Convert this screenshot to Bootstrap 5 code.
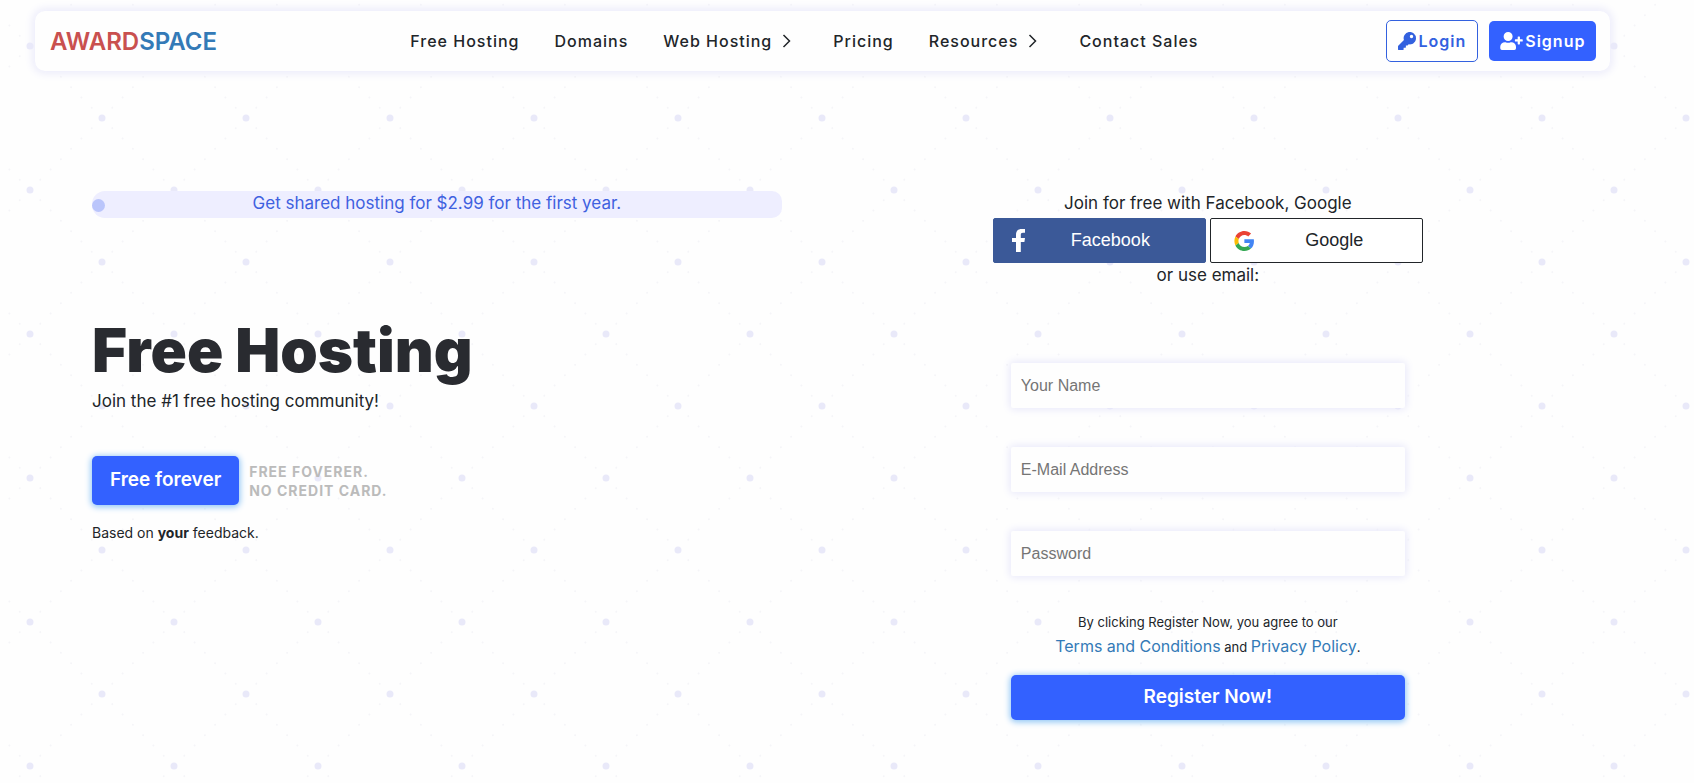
<!DOCTYPE html>
<html lang="en">
<head>
<meta charset="utf-8">
<meta name="viewport" content="width=device-width, initial-scale=1">
<title>Free Hosting - AwardSpace</title>
<link href="https://cdn.jsdelivr.net/npm/bootstrap@5.3.0/dist/css/bootstrap.min.css" rel="stylesheet">
<style>
  :root { --brand: #3361ff; --ink: #212529; }
  body {
    font-family: Inter, "Noto Sans", sans-serif;
    font-size: 17px; line-height: 24px; color: var(--ink);
    background-color: #fefefe;
    background-image: url("data:image/svg+xml,%3Csvg xmlns='http://www.w3.org/2000/svg' width='144' height='144'%3E%3Cg fill='none' stroke-linecap='round'%3E%3Cg stroke='%23f5f5f8' stroke-width='2' stroke-dasharray='0 14.546'%3E%3Cpath d='M30 46L174 190M30 46L-114 -98M30 46L174 -98M30 46L-114 190M-42 118L102 -26M102 118L246 -26M102 118L-42 262M30 190L174 46M30 -98L174 46M-42 -26L102 118M102 118L246 262'/%3E%3C/g%3E%3Cpath d='M30 46h0M102 118h0' stroke='%23e9e9f9' stroke-width='7'/%3E%3C/g%3E%3C/svg%3E");
    background-size: 144px 144px;
  }
  .site-bar {
    width: 93%; margin: 11px 0 0 35px; min-height: 60px; padding: 0 14px 0 15px;
    background: #fefefe; border-radius: 10px; font-size: 16px;
    box-shadow: 0 0 10px 2px #e9e9fa;
  }
  .brand-slot { width: 23.3%; padding-top: 3px; }
  .wordmark { font-size: 24px; font-weight: 600; color: #c9504f; }
  .wordmark span { color: #337ab7; }
  .site-links { gap: 35px; }
  .site-links .nav-link { display: flex; align-items: center; color: var(--ink); font-weight: 500; letter-spacing: 1px; padding: 0 0 1px; }
  .site-links svg { margin: 0 7px 0 10px; }
  .bar-actions { gap: 11px; }
  .bar-btn { height: 40px; padding: 0 11px; font-weight: 600; letter-spacing: 1px; border-radius: 5px; gap: 2px; }
  .bar-login { height: 42px; color: #3361df; border: 1px solid #3361df; background: #fff; }
  .btn-brand, .btn-brand:hover { color: #fff; background: var(--brand); border: 0; }
  .hero { display: grid; grid-template-columns: 7fr 8fr; column-gap: 32px; padding: 120px 92px 40px; }
  .promo { min-height: 27px; padding-bottom: 3px; border-radius: 13px 10px 10px 13px; background: #eeeeff; color: #3f61df; }
  .promo::before { content: ""; width: 13px; height: 13px; margin: 5px -13px 0 0; border-radius: 50%; background: #bac5fb; }
  .hero-title { margin: 96px 0 3px; font-size: 60px; line-height: 72px; font-weight: 900; color: #292b30; }
  .glow { font-weight: 600; font-size: 19px; border-radius: 5px; box-shadow: 0 1px 6px 1px #8cc4f5; }
  .cta-row { gap: 10px; margin-top: 43px; }
  .cta { height: 49px; padding: 0 18px; }
  .register { height: 45px; }
  .fine-caps { font-size: 14px; line-height: 19px; font-weight: 700; letter-spacing: 1px; color: #bbb; }
  .text-note { font-size: 14px; }
  .signup { justify-self: center; width: 430px; max-width: 100%; text-align: center; }
  .social-row { margin-top: 3px; }
  .social { height: 45px; border-radius: 2px; font: 18px "Liberation Sans", Arial, sans-serif; }
  .social-fb, .social-fb:hover { color: #fff; background: #3b5998; border-color: #3b5998; }
  .social-g, .social-g:hover { color: var(--ink); background: #fff; border-color: var(--ink); }
  .signup-form { padding: 76px 18px 0; }
  .field {
    height: 45px; margin-bottom: 39px; padding: 0 10px; border: 0; border-radius: 2px; background: #fefefe;
    font: 16px "Liberation Sans", Arial, sans-serif; box-shadow: 0 0 8px 1px #e6e6fa;
  }
  .field::placeholder { color: #757575; }
  .legal { margin: 34px 0 16px; font-size: 13px; line-height: 24px; }
  .legal a { font-size: 16px; color: #337ab7; text-decoration: none; }
</style>
</head>
<body>
<header>
  <nav class="site-bar d-flex align-items-center" aria-label="Main">
    <div class="brand-slot">
      <a class="wordmark text-decoration-none" href="#">AWARD<span>SPACE</span></a>
    </div>
    <ul class="nav site-links flex-nowrap text-nowrap">
      <li><a class="nav-link" href="#">Free Hosting</a></li>
      <li><a class="nav-link" href="#">Domains</a></li>
      <li><a class="nav-link" href="#">Web Hosting<svg width="9" height="14" viewBox="0 0 9 14" fill="none" stroke="currentColor" stroke-width="1.5" aria-hidden="true"><path d="M1.5 1l6 6-6 6"/></svg></a></li>
      <li><a class="nav-link" href="#">Pricing</a></li>
      <li><a class="nav-link" href="#">Resources<svg width="9" height="14" viewBox="0 0 9 14" fill="none" stroke="currentColor" stroke-width="1.5" aria-hidden="true"><path d="M1.5 1l6 6-6 6"/></svg></a></li>
      <li><a class="nav-link" href="#">Contact Sales</a></li>
    </ul>
    <div class="bar-actions d-flex align-items-center ms-auto text-nowrap">
      <button type="button" class="btn bar-btn bar-login d-flex align-items-center"><svg width="18" height="18" viewBox="0 0 512 512" fill="currentColor" aria-hidden="true"><path d="M512 176c0 97-79 176-176 176-11 0-22-1-33-3l-24 27a24 24 0 0 1-18 8h-37v40a24 24 0 0 1-24 24h-40v40a24 24 0 0 1-24 24H24a24 24 0 0 1-24-24v-78c0-6 3-12 7-17l162-162a176 176 0 1 1 343-55zM336 128a48 48 0 1 0 96 0 48 48 0 0 0-96 0z"/></svg><span>Login</span></button>
      <button type="button" class="btn bar-btn btn-brand d-flex align-items-center"><svg width="23" height="18" viewBox="0 0 640 512" fill="currentColor" aria-hidden="true"><path d="M624 208h-64v-64a16 16 0 0 0-16-16h-32a16 16 0 0 0-16 16v64h-64a16 16 0 0 0-16 16v32a16 16 0 0 0 16 16h64v64a16 16 0 0 0 16 16h32a16 16 0 0 0 16-16v-64h64a16 16 0 0 0 16-16v-32a16 16 0 0 0-16-16zM224 256a128 128 0 1 0 0-256 128 128 0 0 0 0 256zm90 32h-17a174 174 0 0 1-146 0h-17A134 134 0 0 0 0 422v42a48 48 0 0 0 48 48h352a48 48 0 0 0 48-48v-42a134 134 0 0 0-134-134z"/></svg><span>Signup</span></button>
    </div>
  </nav>
</header>

<main class="hero">
  <section>
    <div class="promo d-flex align-items-center"><span class="flex-grow-1 text-center">Get shared hosting for $2.99 for the first year.</span></div>
    <h1 class="hero-title">Free Hosting</h1>
    <p class="mb-0">Join the #1 free hosting community!</p>
    <div class="cta-row d-flex align-items-center">
      <button type="button" class="btn btn-brand glow cta">Free forever</button>
      <div class="fine-caps">FREE FOVERER.<br>NO CREDIT CARD.</div>
    </div>
    <p class="text-note mt-3 mb-0">Based on <strong>your</strong> feedback.</p>
  </section>

  <section class="signup">
    <div>Join for free with Facebook, Google</div>
    <div class="social-row d-flex gap-1">
      <button type="button" class="btn social social-fb d-flex align-items-center w-50"><svg class="ms-1" width="18" height="23" viewBox="-1 0 18 23" fill="currentColor" aria-hidden="true"><path d="M5 23V13H1V9h4V6c0-4 2-6 5.500-6H14v3.800h-2c-1.700 0-2.200.8-2.200 2.200v3H14l-.6 4H9.800v10z"/></svg><span class="flex-grow-1">Facebook</span></button>
      <button type="button" class="btn social social-g d-flex align-items-center w-50"><svg class="ms-2" width="28" height="20" viewBox="-8 0 67 48" aria-hidden="true"><path fill="#EA4335" d="M24 9.500c3.540 0 6.710 1.220 9.210 3.600l6.850-6.850C35.900 2.380 30.470 0 24 0 14.620 0 6.510 5.380 2.560 13.220l7.980 6.190C12.430 13.720 17.740 9.500 24 9.500z"/><path fill="#4285F4" d="M46.980 24.550c0-1.570-.15-3.090-.38-4.550H24v9.020h12.940c-.58 2.960-2.260 5.480-4.780 7.180l7.730 6c4.510-4.180 7.090-10.360 7.090-17.650z"/><path fill="#FBBC05" d="M10.530 28.590c-.48-1.450-.76-2.990-.76-4.590s.27-3.140.76-4.590l-7.980-6.190C.92 16.460 0 20.120 0 24s.92 7.540 2.560 10.780l7.970-6.190z"/><path fill="#34A853" d="M24 48c6.480 0 11.930-2.130 15.890-5.810l-7.730-6c-2.150 1.450-4.920 2.300-8.160 2.300-6.260 0-11.570-4.220-13.470-9.910l-7.980 6.190C6.510 42.620 14.620 48 24 48z"/></svg><span class="flex-grow-1">Google</span></button>
    </div>
    <div>or use email:</div>
    <form class="signup-form" onsubmit="return false">
      <input class="field form-control" type="text" placeholder="Your Name" aria-label="Your Name">
      <input class="field form-control" type="email" placeholder="E-Mail Address" aria-label="E-Mail Address">
      <input class="field form-control mb-0" type="password" placeholder="Password" aria-label="Password">
      <p class="legal">By clicking Register Now, you agree to our<br><a href="#">Terms and Conditions</a> and <a href="#">Privacy Policy</a>.</p>
      <button type="submit" class="btn btn-brand glow w-100 register">Register Now!</button>
    </form>
  </section>
</main>
<script src="https://cdn.jsdelivr.net/npm/bootstrap@5.3.0/dist/js/bootstrap.bundle.min.js"></script>
</body>
</html>
